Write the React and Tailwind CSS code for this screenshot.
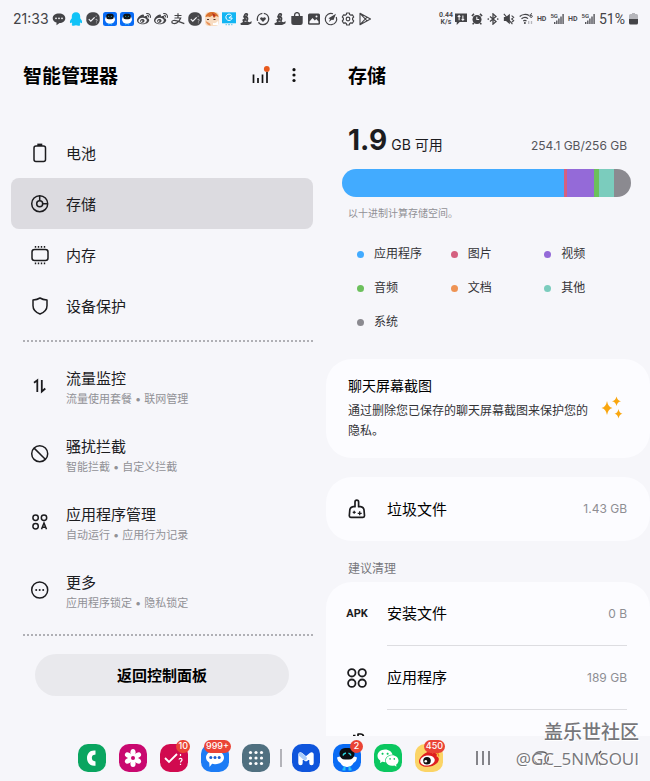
import React from "react";
import { FaWeibo } from "react-icons/fa";
import { AiFillWechat } from "react-icons/ai";

const INK = "#1c1c1f";

/* ---------- status bar icons ---------- */

function Glyph({ children, className = "size-[14px]", box = "0 0 14 14" }) {
  return (
    <svg viewBox={box} className={className + " shrink-0"} fill="none" aria-hidden="true">
      {children}
    </svg>
  );
}

function ChatDots() {
  return (
    <Glyph>
      <path d="M7 1.4c3.7 0 6.3 2 6.3 4.8S10.700 11 7.500 11L4.500 13.200V10.600C2.200 9.900.700 8.300.700 6.200.700 3.400 3.300 1.400 7 1.400Z" fill="#444447" />
      <g fill="#f6f6fa"><circle cx="4" cy="6.300" r=".9" /><circle cx="7" cy="6.300" r=".9" /><circle cx="10" cy="6.300" r=".9" /></g>
    </Glyph>
  );
}

function Penguin() {
  return (
    <Glyph>
      <path d="M7 .3c2.800 0 4.200 1.900 4.200 4.300v1.600c1.400 1.500 2.200 3.200 1.800 4.600-.3.700-1 .3-1.400-.5-.2.800-.5 1.300-1 1.800.7.300.9 1 .3 1.300-.9.500-2.800.3-3.900-.2-1.100.5-3 .7-3.900.2-.6-.3-.4-1 .3-1.300-.5-.5-.8-1-1-1.800-.4.800-1.100 1.200-1.400.5-.4-1.400.4-3.100 1.800-4.600V4.600C2.800 2.200 4.200.3 7 .3Z" fill="#11c3f7" />
    </Glyph>
  );
}

function CheckBadge() {
  return (
    <Glyph>
      <rect x=".3" y=".3" width="13.400" height="13.400" rx="5.500" fill="#47474a" />
      <path d="m2.800 7.200 2 2L8.600 5.400" stroke="#f6f6fa" strokeWidth="1.200" />
      <path d="M9.600 4.200h1.200M9.500 8c.1-.8 1.800-.9 1.800.1 0 .7-.9.700-.9 1.500M10.400 10.500v.8" stroke="#cfcfd4" strokeWidth=".8" />
    </Glyph>
  );
}

function RobotBadge() {
  return (
    <Glyph>
      <rect width="14" height="14" rx="2.500" fill="#0a6cf5" />
      <ellipse cx="7" cy="7.500" rx="5" ry="4.200" fill="#fff" />
      <rect x="3.200" y="1.800" width="7.600" height="5.400" rx="2.500" fill="#101317" />
      <path d="M5 4.800q.6-.8 1.200 0M7.800 4.800q.6-.8 1.200 0" stroke="#39d3e8" strokeWidth=".7" />
      <path d="M5.300 12.200h1M7.800 12.200h1" stroke="#39d3e8" strokeWidth="1" />
    </Glyph>
  );
}

function PayMark() {
  return (
    <Glyph>
      <path d="M3.500 3.500h7M7 1.200v4.500M3.500 6h6.200c-.7 2-2.200 3.900-4 4.900-1.900 1-4.900.9-4.900-.8 0-1.800 2.800-2 5.200-1.200l7.300 2.700" stroke="#444447" strokeWidth="1.200" />
    </Glyph>
  );
}

function Avatar() {
  return (
    <Glyph>
      <rect width="14" height="14" rx="4" fill="#f7dcc2" />
      <path d="M.5 5C1 1.500 4 0 7 0s6 1.500 6.500 5L11 4 9 6 7.500 3.500 5 5 3 4.500Z" fill="#d9722e" />
      <path d="m7 1 3.500 2L9 5.500Z" fill="#b32b22" />
      <path d="M2 7.500h2M8.500 7.500h2" stroke="#51352a" strokeWidth="1" />
      <path d="M.7 9c.5 3 3 4.500 5 4.500L5 11.500Z" fill="#e8925a" />
      <path d="M8 11c2 .5 4-.5 5.300-2.500V13H8Z" fill="#fff" />
    </Glyph>
  );
}

function Monitor() {
  return (
    <Glyph>
      <rect width="14" height="11" y=".3" fill="#12b5f3" />
      <path d="M9.600 3.300A3.200 3.200 0 1 0 10.200 6H7.200M6.800 5.800l3-2" stroke="#fff" strokeWidth="1" />
      <path d="M3.500 12.700h1.500M6 12.700h2M9 12.700h1.500" stroke="#7fd0f0" strokeWidth="1.300" />
    </Glyph>
  );
}

function Figure() {
  return (
    <Glyph>
      <path d="M5.200 2.200C6 .8 8.300.4 9 1.800c.5 1.200-.2 2-.7 2.700.9.600 1.300 1.700 1 3L8.600 9.500l1.700.8 2.500-1-.5 2.200-3.300 1.600H3.400C1.700 13 1 12 1.600 11.200L4 10 3.300 7.800l2-1.300L4 5Z" fill="#444447" />
      <path d="M5.500 9.300h2M6.800 6.300l1 .8M6.500 3.200h1" stroke="#f6f6fa" strokeWidth=".8" />
    </Glyph>
  );
}

function HeartRing() {
  return (
    <Glyph>
      <circle cx="7" cy="7" r="5.700" stroke="#444447" strokeWidth="1.300" strokeDasharray="14 1.500 10 1.500" />
      <path d="M7 10 4.300 7.200C3.400 5.800 5.500 4.200 7 5.900 8.500 4.200 10.600 5.800 9.700 7.200Z" fill="#444447" />
    </Glyph>
  );
}

function Bag() {
  return (
    <Glyph>
      <path d="M4.600 4.500V3a2.400 2.400 0 0 1 4.800 0v1.500" stroke="#444447" strokeWidth="1.300" />
      <path d="M1.300 4h11.400v6.500a2.500 2.500 0 0 1-2.500 2.500H3.800a2.500 2.500 0 0 1-2.500-2.500Z" fill="#444447" />
    </Glyph>
  );
}

function Picture() {
  return (
    <Glyph>
      <rect x="1" y="1.500" width="12" height="11.200" rx="1.500" fill="#444447" />
      <path d="M2.500 9.500 5.500 6l2.300 2.500L9.300 7l2.200 2.500v1.700h-9Z" fill="#f6f6fa" />
      <circle cx="9.500" cy="4.500" r="1" fill="#f6f6fa" />
    </Glyph>
  );
}

function Compass() {
  return (
    <Glyph>
      <path d="M12.300 5A5.700 5.700 0 1 1 9 1.700" stroke="#444447" strokeWidth="1.200" />
      <path d="M12 1.800 9.500 8 7.700 7.700 5 10l1-3-1.500-.8Z" fill="#444447" />
    </Glyph>
  );
}

function Gear() {
  return (
    <Glyph>
      <path d="m5.700 1-.4 1.500-1.100.7-1.600-.4L1.300 5l1.100 1.200v1.500L1.300 9l1.300 2.200 1.600-.4 1.100.7.400 1.500h2.600l.4-1.500 1.100-.7 1.600.4L12.700 9l-1.100-1.300V6.200L12.700 5l-1.300-2.200-1.600.4-1.100-.7L8.300 1Z" stroke="#444447" strokeWidth="1.200" strokeLinejoin="round" />
      <circle cx="7" cy="7" r="1.800" stroke="#444447" strokeWidth="1.200" />
    </Glyph>
  );
}

function PlayMark() {
  return (
    <Glyph>
      <path d="M2 1.300 12.500 7 2 12.700ZM2 1.300l7 7.500M2 12.700l7-7.500" stroke="#444447" strokeWidth="1.100" strokeLinejoin="round" />
    </Glyph>
  );
}

function WeiboMark() {
  return <FaWeibo className="size-[14px] shrink-0 text-[#444447]" aria-hidden="true" />;
}

const NOTIFICATIONS = [
  ChatDots, Penguin, CheckBadge, RobotBadge, RobotBadge, WeiboMark, WeiboMark, PayMark, CheckBadge,
  Avatar, Monitor, Figure, HeartRing, Figure, Bag, Picture, Compass, Gear, PlayMark,
];

function Signal() {
  return (
    <span className="flex items-end">
      <span className="self-start text-[6px] font-semibold leading-[6px]">5G</span>
      <svg viewBox="0 0 10 12" className="-ml-1 h-3 w-[10px]" aria-hidden="true">
        <g fill="#55555a">
          <rect x="0" y="9" width="1.400" height="2" /><rect x="2.100" y="7.500" width="1.400" height="3.500" />
          <rect x="4.200" y="5.500" width="1.400" height="5.500" /><rect x="6.300" y="3.500" width="1.400" height="7.500" />
          <rect x="8.400" y="1" width="1.400" height="10" />
        </g>
      </svg>
    </span>
  );
}

function StatusBar() {
  return (
    <header className="flex h-[38px] shrink-0 items-center justify-between pl-[13px] pr-3 text-[#444447]">
      <div className="flex items-center gap-[3px]">
        <span className="w-9 text-sm">21:33</span>
        {NOTIFICATIONS.map((Icon, i) => <Icon key={i} />)}
      </div>
      <div className="flex items-center gap-1 font-['Roboto']">
        <div className="flex items-center gap-0.5">
          <span className="text-center text-[7px] font-semibold leading-[7px]">0.44<br />K/s</span>
          <Glyph className="size-3">
            <path d="M0 .5h14v10H5.500L2 14v-3.500H0Z" fill="#444447" />
            <path d="M4.800 8.500V3M3.200 4.500 4.800 3l1.400 1.500M9.200 3v5.500M7.700 7l1.500 1.500L10.700 7" stroke="#f6f6fa" strokeWidth="1.200" />
          </Glyph>
        </div>
        <Glyph className="size-3">
          <circle cx="7" cy="7.500" r="5.300" fill="#444447" />
          <path d="M1 3.500 3.500 1M13 3.500 10.500 1M3.200 11.500 2 13.300M10.800 11.500 12 13.300" stroke="#444447" strokeWidth="1.800" />
          <path d="M6.800 4.500v3.200h2.700" stroke="#f6f6fa" strokeWidth="1.200" />
        </Glyph>
        <Glyph className="size-3">
          <path d="m3.500 4 7 6L7 13V1l3.500 3-7 6" stroke="#444447" strokeWidth="1.500" />
          <g fill="#444447"><circle cx="1.500" cy="7" r="1" /><circle cx="12.500" cy="7" r="1" /></g>
        </Glyph>
        <Glyph className="size-3">
          <path d="M1 4.700h2.500L8 1v12L3.500 9.300H1Z" fill="#444447" />
          <path d="m1 1 10 12" stroke="#444447" strokeWidth="1.300" />
          <path d="m10 3 2.500 2L10 7l2.500 2L10 11" stroke="#444447" strokeWidth="1.200" />
        </Glyph>
        <Glyph className="size-[14px]">
          <path d="M.7 4.500C3 2.200 7.500 1.700 10 3.600M2.500 6.800c2-1.700 4.700-1.700 6.500-.2M4.300 9c1-.8 2.200-.8 3.200 0" stroke="#444447" strokeWidth="1.200" />
          <circle cx="5.900" cy="11" r="1" fill="#444447" />
          <path d="M13 1.600c-1.800.2-2 1.500-2 2.700 0 1.500 2.300 1.500 2.300 0s-2.300-1.300-2.300 0" stroke="#444447" strokeWidth="1" />
          <path d="M9.700 9v3M12.500 9v3" stroke="#b7b7bc" strokeWidth="1.300" />
        </Glyph>
        <span className="text-[7px] font-semibold">HD</span>
        <Signal />
        <span className="text-[7px] font-semibold">HD</span>
        <Signal />
        <span className="text-sm">51%</span>
        <svg viewBox="0 0 9 12" className="h-3 w-[9px]" aria-hidden="true">
          <path d="M3 0h3v1h1.500A1.500 1.500 0 0 1 9 2.500V6H0V2.500A1.500 1.500 0 0 1 1.500 1H3Z" fill="#b5b5ba" />
          <path d="M0 6h9v4a1.500 1.500 0 0 1-1.500 1.500h-6A1.500 1.500 0 0 1 0 10Z" fill="#444447" />
        </svg>
      </div>
    </header>
  );
}

/* ---------- navigation icons ---------- */

function Line({ children }) {
  return (
    <svg viewBox="0 0 20 20" className="size-5 shrink-0" fill="none" stroke={INK} strokeWidth="1.500" aria-hidden="true">
      {children}
    </svg>
  );
}

const batteryIcon = (
  <Line><rect x="4" y="3" width="11.500" height="15.500" rx="2" /><path d="M7.300 1.800h5" strokeWidth="2.400" /></Line>
);
const storageIcon = (
  <Line><circle cx="9.700" cy="9.700" r="8" /><circle cx="9.700" cy="9.700" r="3" /><path d="M9.700 1.700v5M12.700 9.700h5" /></Line>
);
const memoryIcon = (
  <Line>
    <rect x="2" y="4.500" width="16" height="11" rx="2.500" />
    <path d="M5.500 1v1.700M8.500 1v1.700M11.500 1v1.700M14.500 1v1.700M5.500 17.500v1.700M8.500 17.500v1.700M11.500 17.500v1.700M14.500 17.500v1.700" strokeWidth="1.400" />
  </Line>
);
const shieldIcon = (
  <Line><path d="M10 2c2.200 1.400 4.500 1.800 7 1.900v5.800c0 4-3.200 6.800-7 8.300-3.800-1.500-7-4.300-7-8.300V3.900C5.500 3.800 7.800 3.400 10 2Z" strokeLinejoin="round" /></Line>
);
const trafficIcon = (
  <Line><path d="M4 6.700 7.300 4.300V16M11.800 4v11.500L15.300 12.500" strokeWidth="1.800" /></Line>
);
const blockIcon = (
  <Line><circle cx="9.700" cy="9.700" r="8" /><path d="m4.100 4.100 11.200 11.200" /></Line>
);
const appsIcon = (
  <Line>
    <circle cx="5.600" cy="5.800" r="2.700" /><circle cx="14" cy="5.800" r="2.700" /><circle cx="5.600" cy="14.200" r="2.700" />
    <path d="m11.500 17.300 2.500-6.300 2.500 6.300M12.300 15.300h3.400" />
  </Line>
);
const moreIcon = (
  <Line><circle cx="9.700" cy="10" r="8" /><g fill={INK} stroke="none"><circle cx="6.200" cy="10" r="1" /><circle cx="9.700" cy="10" r="1" /><circle cx="13.200" cy="10" r="1" /></g></Line>
);

const DEVICE_ITEMS = [
  { label: "电池", icon: batteryIcon },
  { label: "存储", icon: storageIcon, active: true },
  { label: "内存", icon: memoryIcon },
  { label: "设备保护", icon: shieldIcon },
];

const TOOL_ITEMS = [
  { label: "流量监控", note: "流量使用套餐 • 联网管理", icon: trafficIcon },
  { label: "骚扰拦截", note: "智能拦截 • 自定义拦截", icon: blockIcon },
  { label: "应用程序管理", note: "自动运行 • 应用行为记录", icon: appsIcon },
  { label: "更多", note: "应用程序锁定 • 隐私锁定", icon: moreIcon },
];

function DottedRule() {
  return (
    <svg className="ml-3 h-[2px] w-[calc(100%-12px)]" aria-hidden="true">
      <line x1="0" y1="1" x2="100%" y2="1" stroke="#b0b0b5" strokeWidth="2" strokeDasharray="2 2" />
    </svg>
  );
}

function Sidebar() {
  return (
    <aside className="w-1/2 shrink-0 pl-[11px] pr-3">
      <div className="flex h-[76px] items-center pl-3 pr-3">
        <h1 className="flex-1 pt-0.5 text-[19px] font-bold text-black">智能管理器</h1>
        <button type="button" aria-label="使用统计" className="mr-[15px]">
          <svg viewBox="0 0 20 20" className="size-5" aria-hidden="true">
            <path d="M3.500 8.500V17M8 12v5M12.500 8.500V17M17 5.500V17" stroke="#111" strokeWidth="1.700" />
            <circle cx="16.800" cy="2.900" r="2.900" fill="#e8591c" />
          </svg>
        </button>
        <button type="button" aria-label="更多选项">
          <svg viewBox="0 0 16 20" className="h-5 w-4" aria-hidden="true">
            <g fill="#111"><circle cx="9" cy="3.700" r="1.600" /><circle cx="9" cy="9" r="1.600" /><circle cx="9" cy="14.500" r="1.600" /></g>
          </svg>
        </button>
      </div>
      <nav className="mt-[13px]">
        {DEVICE_ITEMS.map((it) => (
          <button
            key={it.label}
            type="button"
            className={
              "flex h-[51px] w-full items-center gap-4 rounded-lg px-[19px] text-left text-[15px] " +
              (it.active ? "bg-[#dcdbe0]" : "")
            }
          >
            {it.icon}
            <span className="pt-1">{it.label}</span>
          </button>
        ))}
        <div className="pb-3 pt-[9px]"><DottedRule /></div>
        {TOOL_ITEMS.map((it) => (
          <button key={it.label} type="button" className="flex h-[68px] w-full items-center gap-4 px-[19px] text-left">
            <span className="pb-1">{it.icon}</span>
            <span className="flex flex-col">
              <span className="text-[15px] leading-[22px]">{it.label}</span>
              <span className="text-[11px] leading-[18px] text-[#919196]">{it.note}</span>
            </span>
          </button>
        ))}
        <div className="pb-[18px] pt-2"><DottedRule /></div>
      </nav>
      <button type="button" className="mx-6 flex h-[42px] w-[calc(100%-48px)] items-center justify-center rounded-full bg-[#e9e9ed] pt-0.5 text-[15px] font-bold text-black">
        返回控制面板
      </button>
    </aside>
  );
}

/* ---------- storage panel ---------- */

const SEGMENTS = [
  { name: "应用程序", share: 222, color: "#42abff" },
  { name: "图片", share: 3, color: "#d4607f" },
  { name: "视频", share: 27, color: "#946ad8" },
  { name: "音频", share: 5, color: "#6cc05c" },
  { name: "文档", share: 0, color: "#ee9354" },
  { name: "其他", share: 15, color: "#7bccbd" },
  { name: "系统", share: 17, color: "#8b8a90" },
];

const broomIcon = (
  <Line>
    <path d="M2.300 16.800 2.800 11Q3.200 8 6.200 7.700H8V3a1.800 1.800 0 0 1 3.600 0v4.700h2q3 .3 3.400 3.300l.5 5.800q0 1.500-1.500 1.500H3.800q-1.500 0-1.500-1.500Z" strokeWidth="1.700" strokeLinejoin="round" />
    <path d="M7.200 11.800v3M5.700 13.300h3M12.700 12.300v4M10.700 14.300h4" strokeWidth="1.300" />
  </Line>
);
const gridIcon = (
  <Line>
    <g strokeWidth="1.800"><circle cx="4.800" cy="4.800" r="3.700" /><circle cx="15.200" cy="4.800" r="3.700" /><circle cx="4.800" cy="15.200" r="3.700" /><circle cx="15.200" cy="15.200" r="3.700" /></g>
  </Line>
);

function FileRow({ icon, label, size, divided }) {
  return (
    <button type="button" className="flex h-16 w-full items-center gap-5 pl-[21px] pr-[23px] text-left">
      {icon}
      <span className={"flex h-full flex-1 items-center justify-between " + (divided ? "border-b border-[#dddde1]" : "")}>
        <span className="pt-0.5 text-[15px] text-black">{label}</span>
        <span className="text-xs text-[#8e8e93]">{size}</span>
      </span>
    </button>
  );
}

function StoragePanel() {
  return (
    <section className="flex min-w-0 flex-1 flex-col overflow-hidden pl-px">
      <div className="flex h-[76px] shrink-0 items-center pl-[22px]">
        <h2 className="pt-0.5 text-[19px] font-bold text-black">存储</h2>
      </div>
      <div className="mt-2 flex h-9 shrink-0 items-baseline justify-between pl-[22px] pr-[23px]">
        <p className="flex items-baseline gap-1">
          <span className="text-[28px] font-bold leading-9">1.9</span>
          <span className="text-sm">GB 可用</span>
        </p>
        <p className="text-xs text-[#55555a]">254.1 GB/256 GB</p>
      </div>
      <div className="ml-4 mr-[19px] mt-[11px] flex h-7 shrink-0 overflow-hidden rounded-full">
        {SEGMENTS.map((s) => (
          <span key={s.name} style={{ flexGrow: s.share, flexBasis: 0, backgroundColor: s.color }} />
        ))}
      </div>
      <p className="mt-2 shrink-0 pl-[22px] text-[10px] leading-4 text-[#919196]">以十进制计算存储空间。</p>
      <ul className="mt-4 grid shrink-0 grid-cols-3 pl-[31px] pr-3 text-xs leading-[34px] text-[#333337]">
        {SEGMENTS.map((s) => (
          <li key={s.name} className="flex items-center gap-2.5">
            <span className="size-[7px] rounded-full" style={{ backgroundColor: s.color }} />
            {s.name}
          </li>
        ))}
      </ul>
      <article className="mt-5 flex shrink-0 items-center rounded-[26px] bg-[#fcfcff] pb-[17px] pl-[22px] pr-[27px] pt-4">
        <div className="flex-1">
          <h3 className="text-sm leading-[22px] text-black">聊天屏幕截图</h3>
          <p className="mt-1 max-w-[252px] text-xs leading-5 text-[#333337]">通过删除您已保存的聊天屏幕截图来保护您的<br />隐私。</p>
        </div>
        <svg viewBox="0 0 22 24" className="h-6 w-[22px] shrink-0" fill="#f9a60f" aria-hidden="true">
          <path d="M6 5q1 6 5.500 7Q7 13 6 19 5 13 .5 12 5 11 6 5ZM15.500 .5q.8 4 4.500 4.800Q16.300 6.100 15.500 10 14.700 6.100 11 5.300 14.700 4.500 15.500 .5ZM17.500 13q.7 4 4 4.700-3.300.8-4 4.800-.7-4-4-4.800 3.300-.7 4-4.700Z" />
        </svg>
      </article>
      <div className="mt-[19px] shrink-0 rounded-[26px] bg-[#fcfcff]">
        <FileRow icon={broomIcon} label="垃圾文件" size="1.43 GB" />
      </div>
      <h3 className="mt-[19px] shrink-0 pl-[22px] text-xs leading-[18px] text-[#77777c]">建议清理</h3>
      <div className="mt-1 shrink-0 rounded-t-[26px] bg-[#fcfcff]">
        <FileRow
          icon={<span className="flex w-5 shrink-0 justify-center font-['Roboto'] text-[11px] font-bold">APK</span>}
          label="安装文件" size="0 B" divided
        />
        <FileRow icon={gridIcon} label="应用程序" size="189 GB" divided />
        <div className="flex h-16 justify-start pl-[21px] pt-[22px]">
          <svg viewBox="0 0 20 20" className="size-5" fill="none" stroke="#111" strokeWidth="1.700" aria-hidden="true">
            <path d="M6 3.500h2.500M11 2h2.500a3 3 0 0 1 3 3v3M11 1.500v5" />
          </svg>
        </div>
      </div>
    </section>
  );
}

/* ---------- dock ---------- */

function AppIcon({ label, bg, badge, children }) {
  return (
    <button type="button" aria-label={label} className="relative size-7 shrink-0">
      <svg viewBox="0 0 28 28" className="size-7" fill="none" aria-hidden="true">
        <rect width="28" height="28" rx="10" fill={bg} />
        {children}
      </svg>
      {badge && (
        <span className="absolute -right-0.5 -top-1 flex h-[13px] min-w-[13px] items-center justify-center rounded-full bg-[#ea4335] px-0.5 text-[9px] font-medium leading-3 text-white">
          {badge}
        </span>
      )}
    </button>
  );
}

function Dock() {
  return (
    <footer className="relative flex h-[45px] shrink-0 items-center pb-0.5 pl-[78px] pr-11">
      <div className="flex items-center gap-[13px]">
        <AppIcon label="电话" bg="#0aa560">
          <path d="M17.500 6.500c-5.500-.8-8.500 3-8.500 7.500s3 8.500 8.500 7.700v-4.200l-2.700-.9c-1.300-1.500-1.300-4 0-5.400l2.700-.8Z" fill="#fff" />
        </AppIcon>
        <AppIcon label="图库" bg="#c9086f">
          <g fill="#fff">
            <ellipse cx="14" cy="8.500" rx="2.600" ry="3.500" /><ellipse cx="14" cy="19.500" rx="2.600" ry="3.500" />
            <ellipse cx="14" cy="8.500" rx="2.600" ry="3.500" transform="rotate(60 14 14)" /><ellipse cx="14" cy="19.500" rx="2.600" ry="3.500" transform="rotate(60 14 14)" />
            <ellipse cx="14" cy="8.500" rx="2.600" ry="3.500" transform="rotate(-60 14 14)" /><ellipse cx="14" cy="19.500" rx="2.600" ry="3.500" transform="rotate(-60 14 14)" />
            <circle cx="14" cy="14" r="4" />
          </g>
          <circle cx="14" cy="14" r="2" fill="#c9086f" />
        </AppIcon>
        <AppIcon label="待办" bg="#d10a4f" badge="10">
          <path d="m5 14 4 4 8-8" stroke="#fff" strokeWidth="1.800" />
          <path d="M19 15.500c.3-1.600 3-1.500 3 .2 0 1.300-1.500 1.300-1.500 2.800M20.500 19.800v1.300M20.500 10v2" stroke="#fff" strokeWidth="1.200" />
        </AppIcon>
        <AppIcon label="信息" bg="#1c7cf5" badge="999+">
          <path d="M14 7c5.200 0 9 2.700 9 6.600s-3.800 6.600-9 6.600c-1 0-2-.1-2.900-.4L8.500 23l-.2-4.300C6.200 17.500 5 15.700 5 13.600 5 9.700 8.800 7 14 7Z" fill="#fff" />
          <g fill="#1c5fd0"><circle cx="9.800" cy="13.500" r="1.500" /><circle cx="14" cy="13.500" r="1.500" /><circle cx="18.200" cy="13.500" r="1.500" /></g>
        </AppIcon>
        <AppIcon label="所有应用" bg="#507080">
          <g fill="#fff">
            {[8.500, 14, 19.500].map((y) => [8.500, 14, 19.500].map((x) => <circle key={x + "-" + y} cx={x} cy={y} r="1.600" />))}
          </g>
        </AppIcon>
      </div>
      <span className="mx-[10px] h-[18px] w-0.5 bg-[#b3b3b9]" />
      <div className="flex items-center gap-[13px]">
        <AppIcon label="会员" bg="#0f55dc">
          <path d="M8.500 19V10.500L14 15l5.500-4.500V19" stroke="#fff" strokeWidth="4.400" strokeLinecap="round" strokeLinejoin="round" />
          <path d="M8.500 10.500 13 14.200" stroke="#a9cdfa" strokeWidth="4" strokeLinecap="round" />
        </AppIcon>
        <AppIcon label="社区" bg="#0a6cf5" badge="2">
          <path d="M4 13.500q3-1.500 10-1.500t10 1.500q-.5 4-3.500 5.500-2 4-6.500 4t-6.500-4Q4.500 17.500 4 13.500Z" fill="#fff" />
          <rect x="6.500" y="4" width="15" height="11.500" rx="5.500" fill="#0b0e12" />
          <path d="M10 11.500C10.800 8 17.200 8 18 11.500" stroke="#2bd6e0" strokeWidth="1.400" strokeDasharray="4 2.500" />
          <path d="M11.500 22.500v3h-2M16.500 22.500v3h2" stroke="#2ac4f5" strokeWidth="2" />
        </AppIcon>
        <AppIcon label="微信" bg="#0bc760">
          <AiFillWechat x="2" y="2" size={24} color="#fff" />
        </AppIcon>
        <AppIcon label="微博" bg="#fbd466" badge="450">
          <path d="M12.500 8c3-2.500 5.500-1.800 4.800 1.600 3.300-1.300 5.500 0 4.200 2.700 3.300 1 2.800 4.500.3 7-4 4-12 4.700-16 1.700-4.300-3.300-.7-9.500 6.700-13Z" fill="#df1f1f" />
          <ellipse cx="12.500" cy="16.500" rx="7.300" ry="5" fill="#fff" transform="rotate(-8 12.500 16.500)" />
          <circle cx="12" cy="16.700" r="3.800" fill="#111" /><circle cx="10.800" cy="17.300" r="1.300" fill="#fff" />
          <path d="M20 8.500c2.500-.3 4 1.500 3.500 4" stroke="#f08a1c" strokeWidth="1.500" />
        </AppIcon>
      </div>
      <div className="ml-8 flex flex-1 items-center justify-between">
        <button type="button" aria-label="最近">
          <svg viewBox="0 0 16 16" className="size-4" aria-hidden="true"><path d="M2 1v14M8 1v14M14 1v14" stroke="#55555a" strokeWidth="1.400" /></svg>
        </button>
        <button type="button" aria-label="主屏幕">
          <svg viewBox="0 0 16 16" className="size-4" fill="none" aria-hidden="true"><rect x="1" y="2" width="14" height="12" rx="5" stroke="#55555a" strokeWidth="1.500" /></svg>
        </button>
        <button type="button" aria-label="返回">
          <svg viewBox="0 0 16 16" className="size-4" fill="none" aria-hidden="true"><path d="m11 1-5 7 5 7" stroke="#55555a" strokeWidth="1.500" /></svg>
        </button>
      </div>
      <div className="pointer-events-none absolute bottom-2.5 right-[11px] text-right text-[#77777b] [text-shadow:0_0_2px_#fff,1px_1px_0_#fff]">
        <p className="text-[19px] font-medium leading-7">盖乐世社区</p>
        <p className="font-['Open_Sans'] text-[17px] leading-6">@GC_5NMSOUI</p>
      </div>
    </footer>
  );
}

export default function App() {
  return (
    <div className="flex h-screen flex-col overflow-hidden bg-[#f6f6fa] font-[Inter,'Noto_Sans_CJK_SC',sans-serif] text-[#1c1c1f]">
      <StatusBar />
      <main className="flex min-h-0 flex-1 overflow-hidden">
        <Sidebar />
        <StoragePanel />
      </main>
      <Dock />
    </div>
  );
}
